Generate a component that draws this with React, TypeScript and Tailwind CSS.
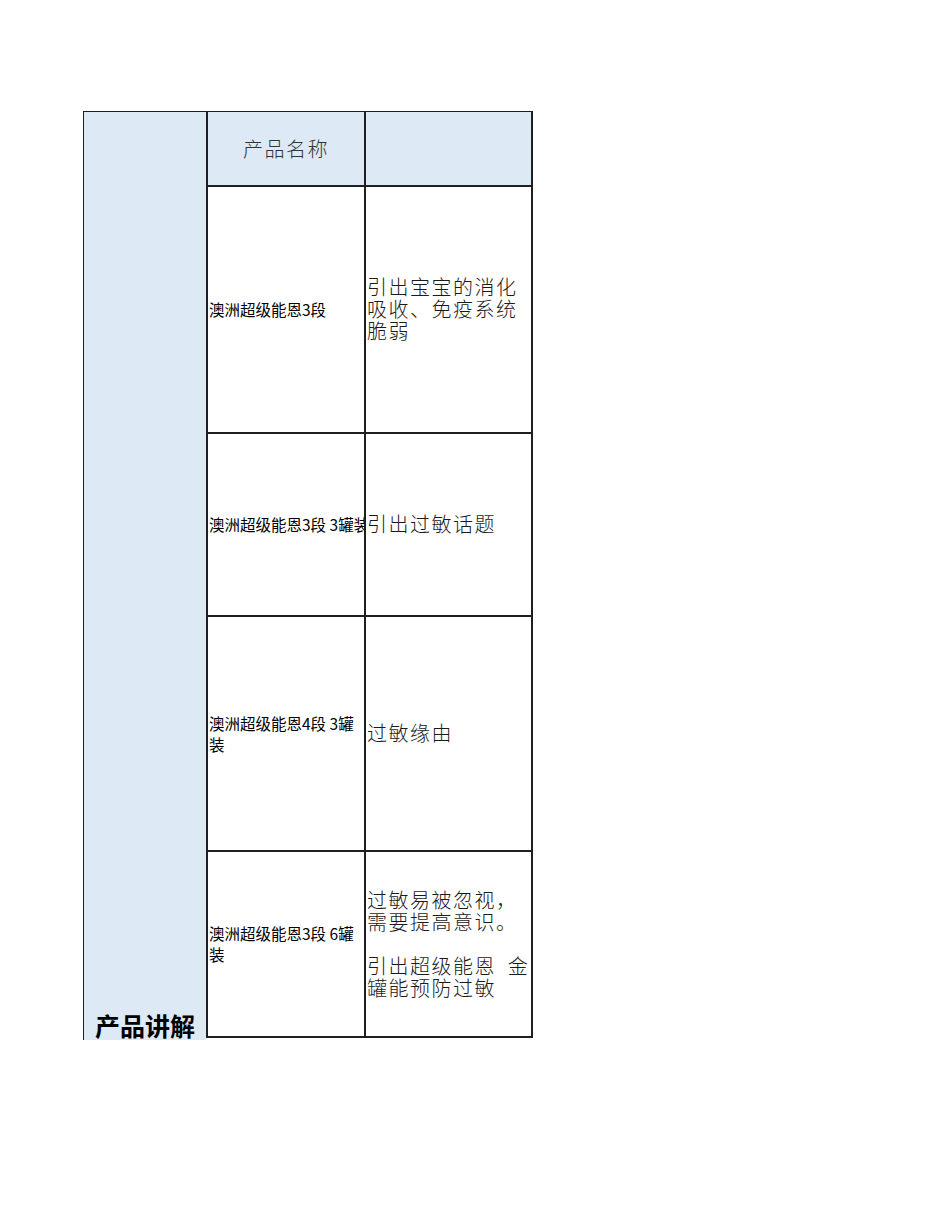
import React from "react";

const sans = { fontFamily: '"Noto Sans CJK SC", "Noto Sans", sans-serif' };

function Row({ h, left, right }: { h: string; left: React.ReactNode; right: React.ReactNode }) {
  return (
    <div className={`flex ${h} border-b-2 border-[#1f1f1f]`}>
      <div className="w-[158px] shrink-0 border-r-2 border-[#1f1f1f] flex items-center pl-[1px] overflow-hidden text-[15.5px] leading-[21px] text-black" style={sans}>
        {left}
      </div>
      <div className="flex-1 flex items-center pl-[1px] pb-[1px] text-[20px] leading-[22px] font-light text-[#1a1a1a] tracking-[1.5px]" style={sans}>
        {right}
      </div>
    </div>
  );
}

export default function App() {
  return (
    <div className="w-[950px] h-[1230px] bg-white relative">
      <div className="pt-[111px] pl-[83px] flex items-start">
        <div className="w-[123px] h-[929px] bg-[#dde9f5] border-l-[1.5px] border-t-[1.5px] border-[#1f1f1f] flex flex-col justify-end items-center overflow-hidden">
          <div className="text-[25px] leading-[30px] font-bold text-black" style={sans}>产品讲解</div>
        </div>
        <div className="w-[327px] border-l-2 border-t-[1.5px] border-r-2 border-[#1f1f1f]">
          <div className="flex h-[75px] bg-[#dde9f5] border-b-2 border-[#1f1f1f]">
            <div className="w-[158px] shrink-0 border-r-2 border-[#1f1f1f] flex items-center justify-center text-[20px] font-light text-[#333] tracking-[1.5px]" style={sans}>
              产品名称
            </div>
            <div className="flex-1" />
          </div>
          <Row
            h="h-[247px]"
            left={<span>澳洲超级能恩3段</span>}
            right={<div>引出宝宝的消化<br />吸收、免疫系统<br />脆弱</div>}
          />
          <Row
            h="h-[183px]"
            left={<span className="whitespace-nowrap">澳洲超级能恩3段 3罐装</span>}
            right={<div>引出过敏话题</div>}
          />
          <Row
            h="h-[235px]"
            left={<span>澳洲超级能恩4段 3罐<br />装</span>}
            right={<div>过敏缘由</div>}
          />
          <Row
            h="h-[186px]"
            left={<span>澳洲超级能恩3段 6罐<br />装</span>}
            right={<div>过敏易被忽视，<br />需要提高意识。<br /><br />引出超级能恩&nbsp;&nbsp;金<br />罐能预防过敏</div>}
          />
        </div>
      </div>
    </div>
  );
}
